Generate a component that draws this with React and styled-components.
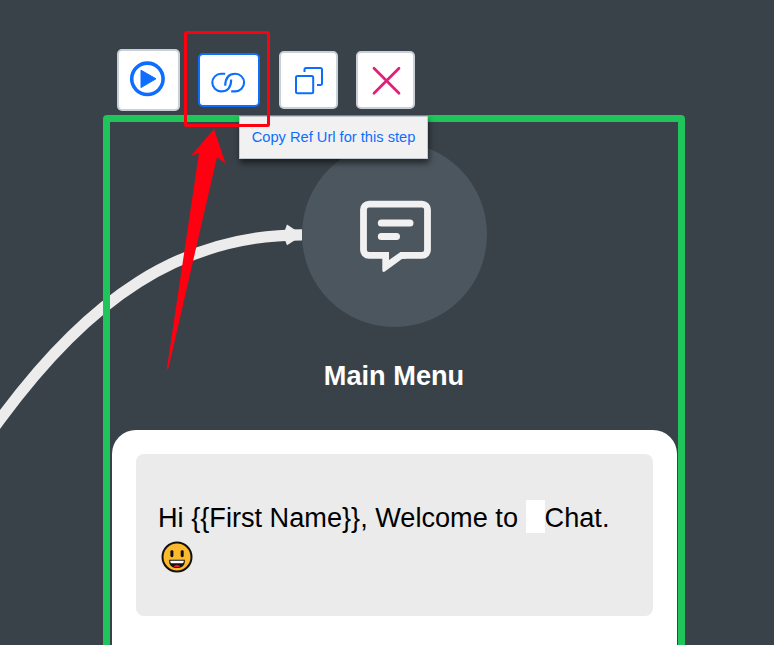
import React from 'react';
import styled, { createGlobalStyle } from 'styled-components';

const GlobalStyle = createGlobalStyle`
  *, *::before, *::after { box-sizing: border-box; }
  body { margin: 0; background: #3a4249; font-family: "Liberation Sans", Arial, sans-serif; }
`;

const Canvas = styled.main`
  position: relative;
  width: 774px;
  height: 645px;
  overflow: hidden;
  background: #3a4249;
`;

const ConnectorLayer = styled.svg`
  position: absolute;
  inset: 0;
  width: 774px;
  height: 645px;
  pointer-events: none;
`;

const Step = styled.section`
  position: relative;
  width: 582px;
  margin-left: 103px;
`;

const Toolbar = styled.div`
  display: flex;
  align-items: center;
  height: 115px;
  padding: 45px 0 0 14px;
`;

const ToolButton = styled.button`
  display: grid;
  place-items: center;
  flex: none;
  width: ${(p) => p.$w}px;
  height: ${(p) => p.$h}px;
  margin: 0 ${(p) => p.$gap || 0}px 0 0;
  padding: 0;
  border: 2px solid ${(p) => (p.$active ? '#0d6efd' : '#c9d0da')};
  border-radius: 5px;
  background: #fff;

  svg { display: block; overflow: visible; }
`;

const Frame = styled.div`
  display: flex;
  flex-direction: column;
  align-items: center;
  height: 600px;
  padding-top: 20px;
  border: 7px solid #1fc45a;
  border-radius: 4px;
`;

const Avatar = styled.div`
  display: grid;
  place-items: center;
  flex: none;
  width: 185px;
  height: 185px;
  border-radius: 50%;
  background: #4c565e;
`;

const Title = styled.h1`
  flex: none;
  margin: 33px 0 0;
  color: #fff;
  font-size: 27.2px;
  line-height: 32px;
`;

const Card = styled.div`
  flex: none;
  width: 565px;
  height: 260px;
  margin-top: 38px;
  padding: 24px;
  border-radius: 24px;
  background: #fff;
`;

const Message = styled.p`
  height: 162px;
  margin: 0;
  padding: 44px 20px 42px 22.5px;
  border-radius: 8px;
  background: #ebebeb;
  color: #000;
  font-size: 27.15px;
  line-height: 40px;
  white-space: nowrap;
`;

const Blank = styled.span`
  display: inline-block;
  width: 19px;
  height: 33px;
  background: #fff;
  vertical-align: -6px;
`;

const Emoji = styled.svg`
  display: block;
  margin: 3px 0 0 2.5px;
`;

const Tooltip = styled.div`
  position: absolute;
  top: 116px;
  left: 136px;
  width: 189px;
  height: 43px;
  border: 1px solid #c3c9d1;
  background: #f1f1f2;
  box-shadow: 1px 4px 6px rgba(0, 0, 0, 0.55);
  color: #0d6efd;
  font-size: 14.67px;
  line-height: 40px;
  text-align: center;
  white-space: nowrap;
`;

const PlayIcon = () => (
  <svg width="36" height="36" viewBox="0 0 36 36">
    <circle cx="16.4" cy="16.8" r="15.7" fill="none" stroke="#0d6efd" strokeWidth="3.6" />
    <path d="M10 8.2 25 16.800 10 25.600Z" fill="#0d6efd" stroke="#0d6efd" strokeLinejoin="round" />
  </svg>
);

const LinkIcon = () => (
  <svg width="38" height="30" viewBox="-0.2 -5.6 38 30" fill="none" stroke="#0d6efd" strokeWidth="2.1">
    <path d="M15 3.2H10.900A8.800 8.800 0 0 0 10.900 20.800C17 20.800 20.900 17 21 8.800" />
    <path d="M15 3.2H10.900A8.800 8.800 0 0 0 10.900 20.800C17 20.800 20.900 17 21 8.800" transform="rotate(180 18 12)" />
  </svg>
);

const CopyIcon = () => (
  <svg width="30" height="30" viewBox="0 0 30 30" fill="none" stroke="#0d6efd" strokeWidth="2">
    <rect x="2" y="11" width="17.2" height="17.2" rx="1.5" />
    <path d="M10.5 7V4.500A1.500 1.500 0 0 1 12 3H26.500A1.500 1.500 0 0 1 28 4.500V18.500A1.500 1.500 0 0 1 26.500 20H23" />
  </svg>
);

const CloseIcon = () => (
  <svg width="30" height="30" viewBox="0 0 30 30" stroke="#e01f78" strokeWidth="2.7" strokeLinecap="round">
    <path d="M3 3.300 28 28.300M28 3.300 3 28.300" />
  </svg>
);

const ChatIcon = () => (
  <svg width="74" height="74" viewBox="-3 -2.700 74 74" fill="none" stroke="#f1f1f1">
    <path d="M25.600 54.700H9A5.500 5.500 0 0 1 3.500 49.200V8.900A5.500 5.500 0 0 1 9 3.400H62A5.500 5.500 0 0 1 67.500 8.900V49.200A5.500 5.500 0 0 1 62 54.700H40" strokeWidth="6.800" />
    <path d="M22.300 51.300H29V59.300L40.500 51.300H46V58H42.300L24.500 71.100Q22.300 71.800 22.300 69.500Z" fill="#f1f1f1" stroke="none" />
    <path d="M21.300 22.300H50M21.300 35.700H36.500" strokeWidth="7" strokeLinecap="round" />
  </svg>
);

const SmileyIcon = () => (
  <Emoji width="32" height="32" viewBox="-16 -16 32 32">
    <circle r="14.500" fill="#fdb92d" stroke="#111" strokeWidth="2" />
    <rect x="-6.600" y="-6.800" width="3" height="7" rx="1.400" fill="#111" />
    <rect x="3.700" y="-6.800" width="3" height="7" rx="1.400" fill="#111" />
    <path d="M-7.800 2.700H7.800V4.500C7.800 13.300-7.800 13.300-7.800 4.500Z" fill="#111" />
    <path d="M-6.800 3.700H6.800C6.800 5.500 6 6.300 5 6.300H-5C-6 6.300-6.800 5.500-6.800 3.700Z" fill="#fff" />
    <path d="M-3.500 9.400Q0 6.200 3.500 9.400Q0 11.200-3.500 9.400Z" fill="#e31b23" />
  </Emoji>
);

export default function App() {
  return (
    <>
      <GlobalStyle />
      <Canvas>
        <ConnectorLayer>
          <path d="M-12 436 0 419.500C88 299.500 180 234.800 302 234.800" fill="none" stroke="#ececec" strokeWidth="11.300" />
          <path d="M287 224.500 296 230.500V239.500L287 245.300 285 240V230Z" fill="#ececec" />
        </ConnectorLayer>
        <Step>
          <Toolbar>
            <ToolButton $w={63} $h={62} $gap={18}><PlayIcon /></ToolButton>
            <ToolButton $w={62} $h={54} $gap={19} $active><LinkIcon /></ToolButton>
            <ToolButton $w={59} $h={58} $gap={18}><CopyIcon /></ToolButton>
            <ToolButton $w={59} $h={58}><CloseIcon /></ToolButton>
          </Toolbar>
          <Frame>
            <Avatar><ChatIcon /></Avatar>
            <Title>Main Menu</Title>
            <Card>
              <Message>
                Hi {'{{First Name}}'}, Welcome to <Blank />Chat.
                <SmileyIcon />
              </Message>
            </Card>
          </Frame>
          <Tooltip>Copy Ref Url for this step</Tooltip>
        </Step>
        <ConnectorLayer>
          <rect x="185.500" y="32.500" width="83" height="93" rx="1" fill="none" stroke="#ff0010" strokeWidth="3" />
          <path d="M214 129 225.500 163.500 217 157 168 370 167 368 199 153 191 156Z" fill="#ff0010" />
        </ConnectorLayer>
      </Canvas>
    </>
  );
}
